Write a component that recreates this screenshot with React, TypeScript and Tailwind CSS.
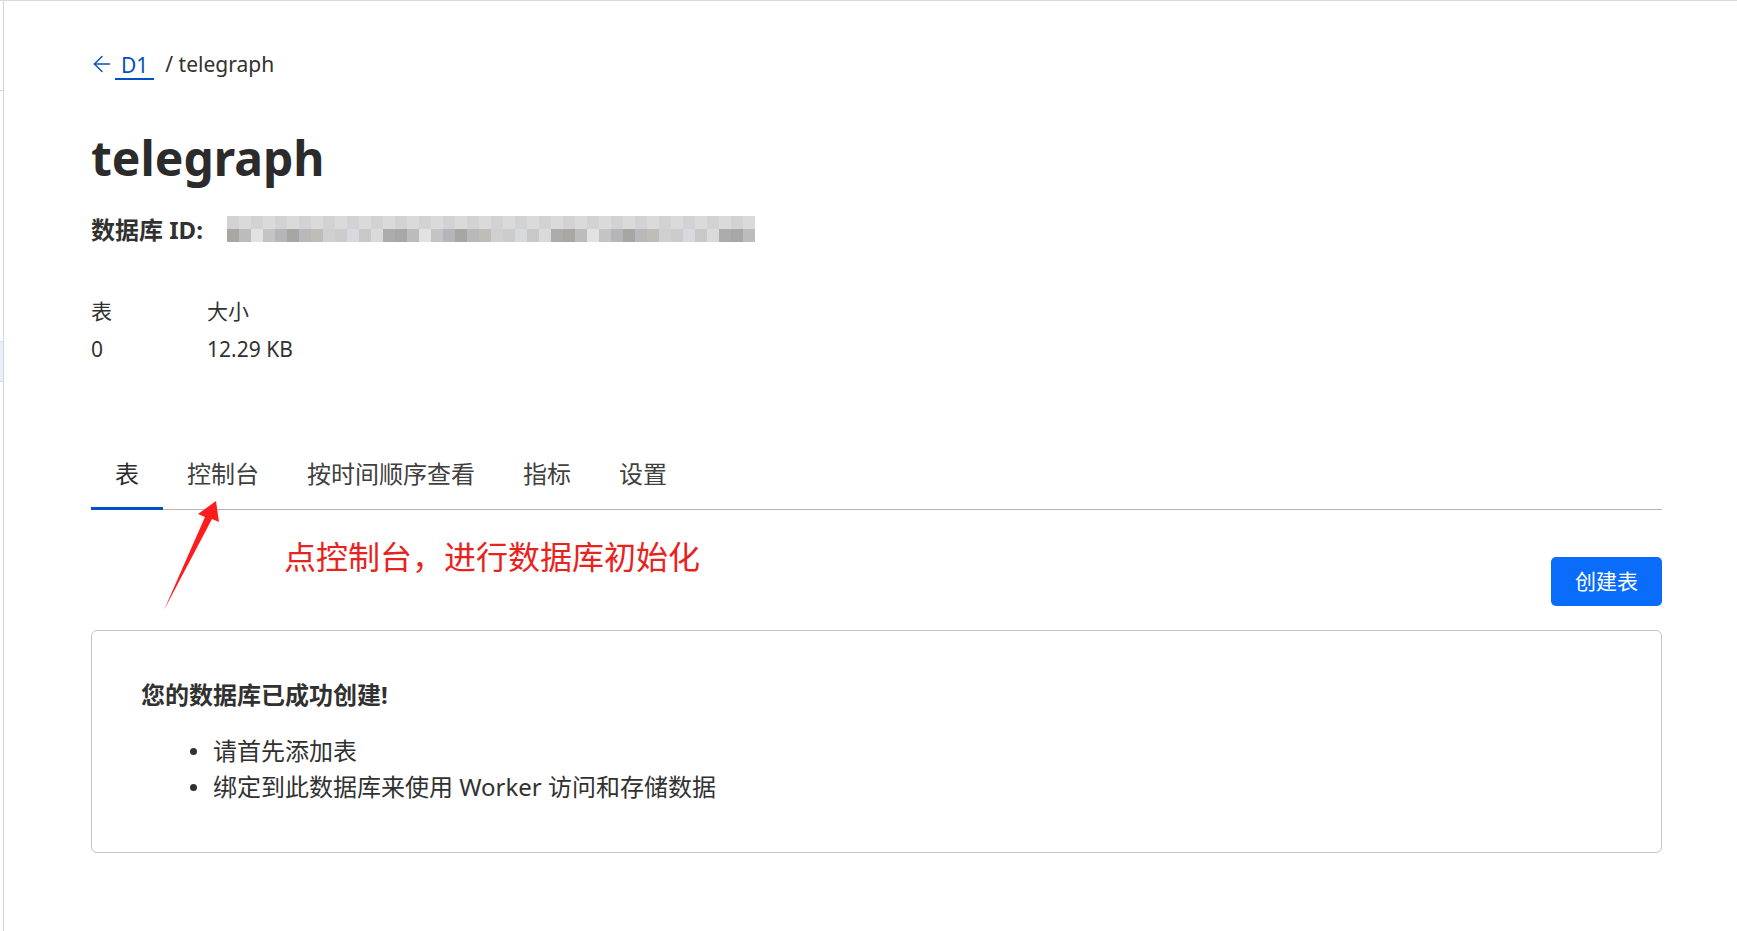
import { ArrowLeft } from 'lucide-react';

const tabs = ['表', '控制台', '按时间顺序查看', '指标', '设置'];

// pixelated id, like the blurred strip in the screenshot
const topShades = ['#ececec', '#dcdcdc', '#e2dedb', '#d2d2d4', '#dedede', '#cdcdcd', '#e4e6e8', '#d6d6d6', '#e8e4e2', '#eef0f2', '#dadada', '#d4d6d6', '#f0f0f0', '#f6f6f8'];
const bottomShades = ['#c8c8c8', '#aaa6a4', '#c4c4c4', '#b8b8b8', '#cccccc', '#dadada', '#bcbcbc', '#b4b6b8', '#c0bcb8', '#d6dadc', '#acacac', '#e4e2e0', '#a8a6a4', '#d0d0d0'];

function Mosaic() {
  const cols = Array.from({ length: 44 }, (_, i) => i);
  return (
    <div className="flex flex-col">
      <div className="flex">
        {cols.map((i) => (
          <div key={i} className="w-[12px] h-[13px]" style={{ backgroundColor: topShades[(i * 7 + 3) % topShades.length] }} />
        ))}
      </div>
      <div className="flex">
        {cols.map((i) => (
          <div key={i} className="w-[12px] h-[13px]" style={{ backgroundColor: bottomShades[(i * 5 + 1) % bottomShades.length] }} />
        ))}
      </div>
    </div>
  );
}

export default function App() {
  return (
    <div className="relative min-h-screen bg-white border-t border-[#dadada] flex text-[#313131] font-['Noto_Sans','Noto_Sans_CJK_SC',sans-serif]">
      {/* sidebar edge */}
      <div className="w-[4px] shrink-0 border-r border-[#d4d4d4] flex flex-col">
        <div className="h-[89px]" />
        <div className="h-px bg-[#d4d4d4]" />
        <div className="h-[250px]" />
        <div className="h-[41px] bg-[#e6effb] border-y border-[#d6dde8]" />
      </div>

      <main className="flex-1 pl-[87px] pr-[75px] pt-[49px] pb-10">
        {/* breadcrumb */}
        <div className="flex items-center h-[28px] text-[21px] leading-[28px]">
          <ArrowLeft size={26} strokeWidth={1.3} className="text-[#0051c3] -ml-[2px]" />
          <a className="px-[6px] text-[#0051c3] border-b-2 border-[#0051c3] leading-[26px] mt-[3px]">D1</a>
          <span className="ml-[11px]">/ telegraph</span>
        </div>

        <h1 className="mt-[52px] text-[48px] leading-[56px] font-bold text-[#2b2b2b]">telegraph</h1>

        <div className="mt-[28px] flex items-center h-[32px]">
          <span className="text-[24px] leading-[32px] font-bold">数据库 ID:</span>
          <div className="ml-[24px] -mt-[3px]">
            <Mosaic />
          </div>
        </div>

        {/* stats */}
        <div className="mt-[50px] grid grid-cols-[116px_auto] gap-y-[8px] text-[21px] leading-[30px] w-fit">
          <span>表</span>
          <span>大小</span>
          <span>0</span>
          <span>12.29 KB</span>
        </div>

        {/* tabs */}
        <div className="mt-[94px] flex border-b border-[#b5b5b5]">
          {tabs.map((t, i) => (
            <button
              key={t}
              className={
                i === 0
                  ? 'px-6 pb-[17px] text-[24px] leading-[32px] -mb-px border-b-[3px] border-[#0051c3] text-[#2b2b2b]'
                  : 'px-6 pb-[17px] text-[24px] leading-[32px] -mb-px border-b-[3px] border-transparent text-[#404040]'
              }
            >
              {t}
            </button>
          ))}
        </div>

        <div className="flex items-start justify-between">
          <p className="mt-[27px] ml-[193px] text-[32px] leading-[40px] text-[#e8231d]">点控制台，进行数据库初始化</p>
          <button className="mt-[47px] h-[49px] px-6 rounded-[5px] bg-[#0a6cfa] text-white text-[21px]">创建表</button>
        </div>

        <section className="mt-[24px] border border-[#c4c4c4] rounded-md pl-[49px] pt-[48px] pb-[47px]">
          <h3 className="text-[24px] leading-[32px] font-bold">您的数据库已成功创建!</h3>
          <ul className="mt-[22px] text-[24px] leading-[36px]">
            <li className="flex items-center pl-[49px]">
              <span className="w-[7px] h-[7px] rounded-full bg-[#313131] mr-[16px]" />
              请首先添加表
            </li>
            <li className="flex items-center pl-[49px]">
              <span className="w-[7px] h-[7px] rounded-full bg-[#313131] mr-[16px]" />
              绑定到此数据库来使用 Worker 访问和存储数据
            </li>
          </ul>
        </section>
      </main>

      {/* annotation arrow */}
      <svg className="absolute left-0 top-0 pointer-events-none" width="1737" height="931" viewBox="0 0 1737 931">
        <polygon points="164,609 205,516 198,513 216,500 219,521 212,518" fill="#ff1c1c" />
      </svg>
    </div>
  );
}
